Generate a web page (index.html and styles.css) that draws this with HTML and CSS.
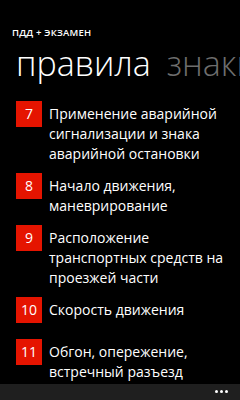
FILE: index.html
```html
<!DOCTYPE html>
<html lang="ru">
<head>
<meta charset="utf-8">
<link rel="stylesheet" href="styles.css">
</head>
<body>
<div class="app">
  <div class="app-title">ПДД + ЭКЗАМЕН</div>
  <div class="pivot">
    <span class="pivot-item active">правила</span>
    <span class="pivot-item">знаки</span>
  </div>
  <ul class="list">
    <li class="item"><span class="num">7</span><span class="text">Применение аварийной сигнализации и знака аварийной остановки</span></li>
    <li class="item"><span class="num">8</span><span class="text">Начало движения, маневрирование</span></li>
    <li class="item"><span class="num">9</span><span class="text">Расположение транспортных средств на проезжей части</span></li>
    <li class="item"><span class="num">10</span><span class="text">Скорость движения</span></li>
    <li class="item"><span class="num">11</span><span class="text">Обгон, опережение, встречный разъезд</span></li>
  </ul>
  <div class="appbar"><span class="dot"></span><span class="dot"></span><span class="dot"></span></div>
</div>
</body>
</html>
```
FILE: styles.css
```css
html, body {
  margin: 0;
  padding: 0;
  background: #000;
}
.app {
  width: 240px;
  height: 400px;
  position: relative;
  overflow: hidden;
  font-family: "Open Sans", "Noto Sans", sans-serif;
  color: #fff;
}
.app-title {
  padding: 27px 0 0 12px;
  font-size: 9.5px;
  font-weight: 600;
  line-height: 12px;
  letter-spacing: 0.2px;
}
.pivot {
  white-space: nowrap;
  padding-left: 16px;
  margin-top: 3px;
  font-size: 34px;
  font-weight: 300;
  line-height: 42px;
  height: 42px;
}
.pivot-item {
  margin-right: 7px;
  color: #6e6e6e;
}
.pivot-item.active {
  color: #fff;
}
.list {
  list-style: none;
  margin: 17px 0 0 0;
  padding: 0 0 0 16px;
}
.item {
  display: flex;
  align-items: flex-start;
  min-height: 33px;
  margin-bottom: 9px;
}
.num {
  flex: none;
  width: 26px;
  height: 26px;
  background: #e51400;
  color: #fff;
  font-size: 14px;
  line-height: 26px;
  text-align: center;
  margin-right: 7px;
}
.text {
  font-size: 14px;
  line-height: 20px;
  padding-top: 3px;
  width: 180px;
}
.appbar {
  position: absolute;
  left: 0;
  right: 0;
  bottom: 0;
  height: 16px;
  background: #1f1f1f;
  display: flex;
  justify-content: flex-end;
  align-items: center;
  gap: 2px;
  padding-right: 12px;
  box-sizing: border-box;
}
.dot {
  width: 3px;
  height: 3px;
  background: #fff;
  border-radius: 50%;
  margin-bottom: 1px;
}
```
